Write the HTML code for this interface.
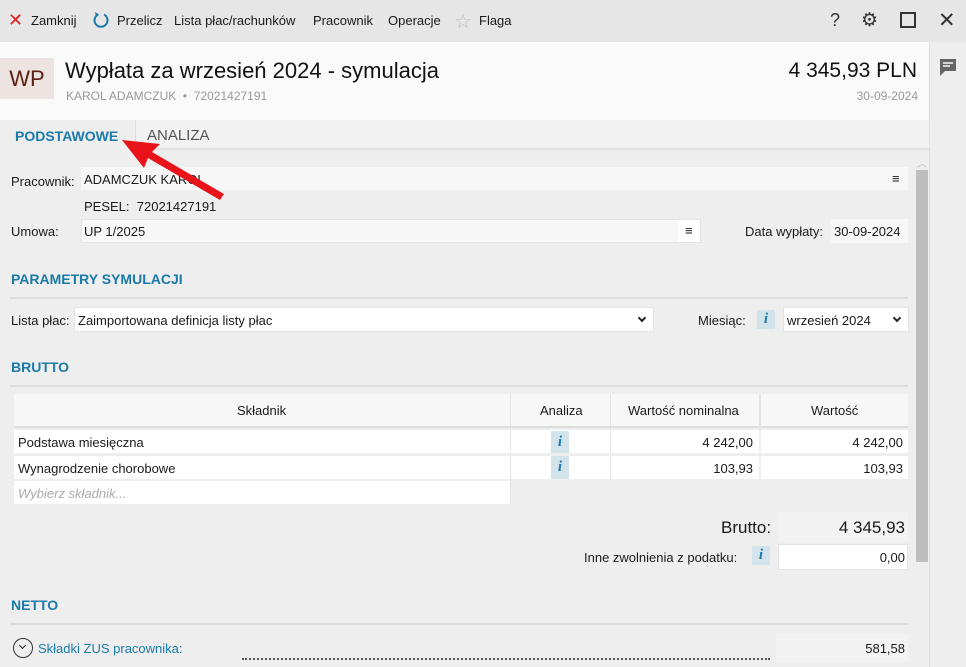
<!DOCTYPE html>
<html><head><meta charset="utf-8"><style>
*{margin:0;padding:0;box-sizing:border-box}
body{width:966px;height:667px;overflow:hidden;background:#eeeeee;font-family:"Liberation Sans",sans-serif;font-size:13px;color:#1a1a1a;position:relative}
.a{position:absolute;white-space:nowrap}
.box{position:absolute;background:#f7f7f7}
.wb{position:absolute;background:#fff}
.h{position:absolute;color:#1a7aa8;font-weight:bold;font-size:14px}
.line{position:absolute;height:2px;background:#dcdcdc}
.info{position:absolute;width:18px;height:19px;background:#d3e3ec;color:#1a7aa8;font:italic bold 15px "Liberation Serif",serif;text-align:center;line-height:19px}
.chev{position:absolute;width:6px;height:6px;border-right:2px solid #222;border-bottom:2px solid #222;transform:rotate(45deg)}
</style></head><body>
<div class="a" style="left:0;top:0;width:966px;height:42px;background:#e6e6e6"></div>
<div class="a" style="left:8px;top:11px;color:#e02020;font-size:18px;line-height:18px">✕</div>
<div class="a" style="left:31px;top:13px">Zamknij</div>
<svg class="a" style="left:92px;top:11px" width="18" height="18" viewBox="0 0 18 18"><path d="M6 3.5A6.5 6.5 0 1 0 12 3.5" fill="none" stroke="#1a7aa8" stroke-width="2"/><path d="M3 1l4 2.5-3 3z" fill="#1a7aa8"/></svg>
<div class="a" style="left:117px;top:13px">Przelicz</div>
<div class="a" style="left:174px;top:13px">Lista płac/rachunków</div>
<div class="a" style="left:313px;top:13px">Pracownik</div>
<div class="a" style="left:388px;top:13px">Operacje</div>
<div class="a" style="left:454px;top:9px;color:#bbb;font-size:20px">☆</div>
<div class="a" style="left:479px;top:13px">Flaga</div>
<div class="a" style="left:830px;top:10px;font-size:18px;color:#333">?</div>
<div class="a" style="left:861px;top:9px;font-size:19px;color:#333">⚙</div>
<div class="a" style="left:900px;top:12px;width:16px;height:16px;border:2px solid #333"></div>
<div class="a" style="left:938px;top:8px;font-size:21px;color:#333">✕</div>

<div class="a" style="left:0;top:42px;width:929px;height:78px;background:#fafafa"></div>
<div class="a" style="left:929px;top:42px;width:37px;height:625px;background:#eeeeee;border-left:1px solid #ddd"></div>
<svg class="a" style="left:938px;top:58px" width="20" height="19" viewBox="0 0 20 19"><path d="M2 1h16v12H7l-5 5z" fill="#666"/><path d="M5 5h10M5 8h7" stroke="#fafafa" stroke-width="1.5"/></svg>
<div class="a" style="left:0;top:58px;width:54px;height:41px;background:#ede3e0;color:#5a1f10;font-size:22px;line-height:41px;text-align:center">WP</div>
<div class="a" style="left:65px;top:58px;font-size:22px;color:#111">Wypłata za wrzesień 2024 - symulacja</div>
<div class="a" style="left:66px;top:89px;font-size:12px;color:#999">KAROL ADAMCZUK &nbsp;•&nbsp; 72021427191</div>
<div class="a" style="right:49px;top:59px;font-size:21px;color:#111">4 345,93 PLN</div>
<div class="a" style="right:48px;top:89px;font-size:12px;color:#999">30-09-2024</div>

<div class="a" style="left:0;top:120px;width:929px;height:30px;background:#f2f2f2;border-bottom:2px solid #e2e2e2"></div>
<div class="a" style="left:0;top:120px;width:136px;height:31px;background:#eeeeee;border-right:1px solid #ddd"></div>
<div class="a" style="left:15px;top:128px;font-size:14px;font-weight:bold;color:#1a7aa8">PODSTAWOWE</div>
<div class="a" style="left:147px;top:127px;font-size:15px;color:#555">ANALIZA</div>

<div class="a" style="left:915px;top:152px;width:14px;height:515px;background:#eeeeee"></div>
<div class="a" style="left:917px;top:155px;font-size:10px;color:#bbb">︿</div>
<div class="a" style="left:916px;top:170px;width:12px;height:392px;background:#bdbdbd"></div>

<div class="a" style="left:11px;top:174px">Pracownik:</div>
<div class="box" style="left:81px;top:167px;width:827px;height:23px"></div>
<div class="a" style="left:84px;top:172px">ADAMCZUK KAROL</div>
<div class="a" style="left:892px;top:171px">≡</div>
<div class="a" style="left:84px;top:199px">PESEL:&nbsp; 72021427191</div>
<div class="a" style="left:11px;top:224px">Umowa:</div>
<div class="box" style="left:81px;top:219px;width:620px;height:24px;border:1px solid #e4e4e4"></div>
<div class="wb" style="left:678px;top:220px;width:22px;height:22px"></div>
<div class="a" style="left:84px;top:224px">UP 1/2025</div>
<div class="a" style="left:685px;top:223px">≡</div>
<div class="a" style="left:745px;top:224px">Data wypłaty:</div>
<div class="box" style="left:831px;top:219px;width:77px;height:24px"></div>
<div class="a" style="left:834px;top:224px">30-09-2024</div>

<svg class="a" style="left:120px;top:138px" width="110" height="64" viewBox="0 0 110 64"><path d="M2 2L24 30 28 20 100 62 104 56 32 14 40 6z" fill="#e8141a"/></svg>

<div class="h" style="left:11px;top:271px">PARAMETRY SYMULACJI</div>
<div class="line" style="left:10px;top:297px;width:898px"></div>
<div class="a" style="left:11px;top:313px">Lista płac:</div>
<div class="wb" style="left:74px;top:307px;width:580px;height:25px;border:1px solid #e4e4e4"></div>
<div class="a" style="left:78px;top:313px">Zaimportowana definicja listy płac</div>
<div class="chev" style="left:639px;top:315px"></div>
<div class="a" style="left:698px;top:313px">Miesiąc:</div>
<div class="info" style="left:757px;top:310px">i</div>
<div class="wb" style="left:783px;top:307px;width:126px;height:25px;border:1px solid #e4e4e4"></div>
<div class="a" style="left:787px;top:313px">wrzesień 2024</div>
<div class="chev" style="left:894px;top:315px"></div>

<div class="h" style="left:11px;top:359px">BRUTTO</div>
<div class="line" style="left:10px;top:385px;width:898px"></div>
<div class="a" style="left:14px;top:394px;width:894px;height:34px;background:#f7f7f7;border-bottom:2px solid #ddd"></div>
<div class="a" style="left:510px;top:394px;width:1px;height:110px;background:#e4e4e4"></div>
<div class="a" style="left:610px;top:394px;width:1px;height:86px;background:#e4e4e4"></div>
<div class="a" style="left:759px;top:394px;width:2px;height:86px;background:#e4e4e4"></div>
<div class="a" style="left:237px;top:403px">Składnik</div>
<div class="a" style="left:540px;top:403px">Analiza</div>
<div class="a" style="left:628px;top:403px">Wartość nominalna</div>
<div class="a" style="left:811px;top:403px">Wartość</div>
<div class="wb" style="left:14px;top:430px;width:894px;height:23px"></div>
<div class="wb" style="left:14px;top:456px;width:894px;height:23px"></div>
<div class="a" style="left:510px;top:430px;width:100px;height:23px;background:#fff;border-left:1px solid #e4e4e4"></div>
<div class="a" style="left:510px;top:456px;width:100px;height:23px;background:#fff;border-left:1px solid #e4e4e4"></div>
<div class="a" style="left:610px;top:430px;width:1px;height:50px;background:#e4e4e4"></div>
<div class="a" style="left:759px;top:430px;width:2px;height:50px;background:#eee"></div>
<div class="a" style="left:14px;top:453px;width:894px;height:3px;background:#eeeeee"></div>
<div class="a" style="left:18px;top:435px">Podstawa miesięczna</div>
<div class="info" style="left:551px;top:431px;height:22px;line-height:22px">i</div>
<div class="a" style="right:213px;top:435px">4 242,00</div>
<div class="a" style="right:63px;top:435px">4 242,00</div>
<div class="a" style="left:18px;top:461px">Wynagrodzenie chorobowe</div>
<div class="info" style="left:551px;top:456px;height:23px;line-height:23px">i</div>
<div class="a" style="right:213px;top:461px">103,93</div>
<div class="a" style="right:63px;top:461px">103,93</div>
<div class="wb" style="left:14px;top:481px;width:496px;height:23px"></div>
<div class="a" style="left:18px;top:486px;color:#aaa;font-style:italic">Wybierz składnik...</div>

<div class="a" style="left:721px;top:518px;font-size:17px">Brutto:</div>
<div class="box" style="left:778px;top:512px;width:130px;height:30px;background:#f2f2f2"></div>
<div class="a" style="right:61px;top:518px;font-size:17px">4 345,93</div>
<div class="a" style="left:584px;top:550px">Inne zwolnienia z podatku:</div>
<div class="info" style="left:752px;top:546px">i</div>
<div class="wb" style="left:778px;top:544px;width:130px;height:26px;border:1px solid #e4e4e4"></div>
<div class="a" style="right:61px;top:550px">0,00</div>

<div class="h" style="left:11px;top:597px">NETTO</div>
<div class="line" style="left:10px;top:623px;width:898px"></div>
<div class="a" style="left:13px;top:638px;width:20px;height:20px;border:1.5px solid #333;border-radius:50%"></div>
<div class="chev" style="left:20px;top:643px;width:5px;height:5px;border-width:1.5px"></div>
<div class="a" style="left:38px;top:641px;color:#1a7aa8">Składki ZUS pracownika:</div>
<div class="a" style="left:242px;top:658px;width:528px;border-top:2px dotted #555"></div>
<div class="box" style="left:776px;top:634px;width:132px;height:28px;background:#f2f2f2"></div>
<div class="a" style="right:61px;top:641px">581,58</div>
</body></html>
